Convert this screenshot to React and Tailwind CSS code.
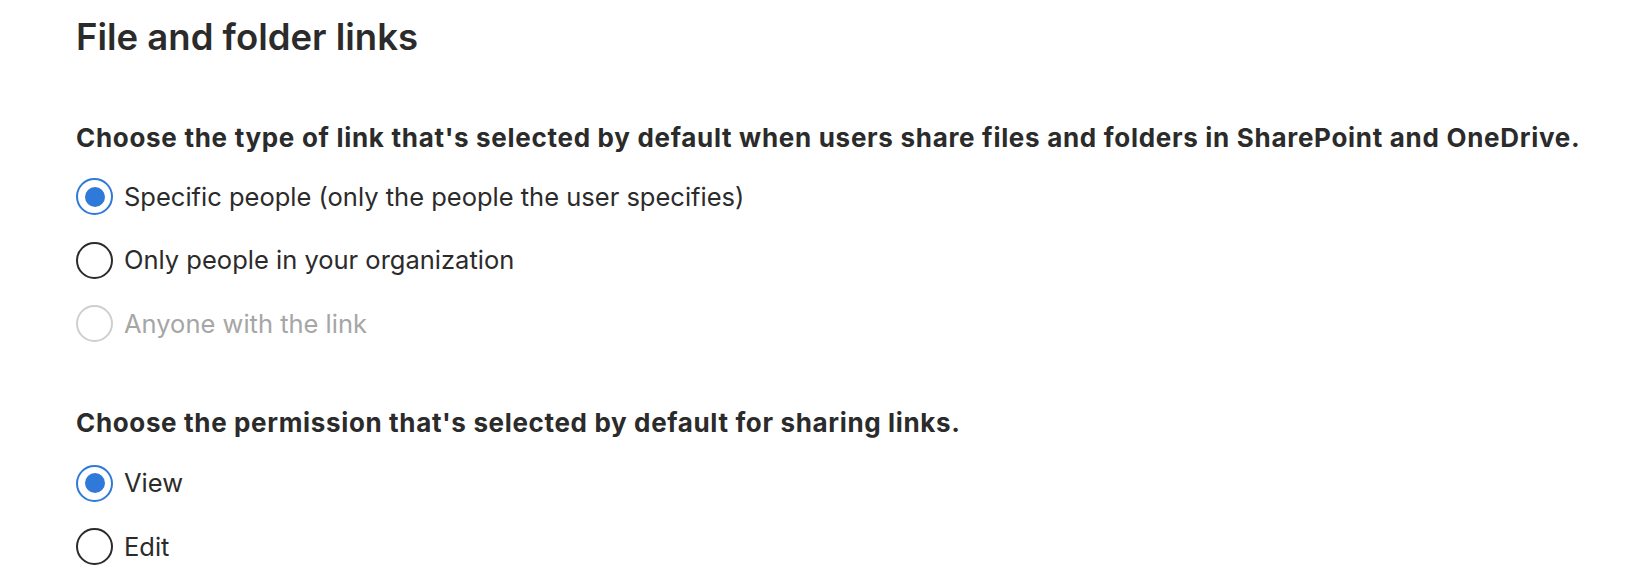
import React from "react";

function Radio({ checked, disabled, label }) {
    return (
        <label className="flex h-[63.5px] items-center gap-[11px]">
            <span
                className={
                    "flex h-[37px] w-[37px] shrink-0 items-center justify-center rounded-full border-[2px] " +
                    (checked ? "border-[#2f7ad8]" : disabled ? "border-[#cfcfcf]" : "border-[#2b2b2b]")
                }
            >
                {checked && <span className="h-[20px] w-[20px] rounded-full bg-[#2f7ad8]" />}
            </span>
            <span className={"text-[25.5px] " + (disabled ? "text-[#a6a6a6]" : "text-[#2b2b2b]")}>
                {label}
            </span>
        </label>
    );
}

export default function App() {
    return (
        <main className="min-h-screen bg-white pl-[76px] pt-[14px] font-['Inter',sans-serif] text-[#2b2b2b]">
            <h1 className="text-[36.5px] font-semibold leading-[46px]">File and folder links</h1>

            <section className="mt-[60px]">
                <h2 className="text-[26px] font-bold leading-[36px] tracking-[0.7px]">
                    Choose the type of link that's selected by default when users share files and folders in SharePoint and OneDrive.
                </h2>
                <div className="mt-[9px] flex flex-col">
                    <Radio checked label="Specific people (only the people the user specifies)" />
                    <Radio label="Only people in your organization" />
                    <Radio disabled label="Anyone with the link" />
                </div>
            </section>

            <section className="mt-[49px]">
                <h2 className="text-[26px] font-bold leading-[36px] tracking-[0.65px]">
                    Choose the permission that's selected by default for sharing links.
                </h2>
                <div className="mt-[11px] flex flex-col">
                    <Radio checked label="View" />
                    <Radio label="Edit" />
                </div>
            </section>
        </main>
    );
}
